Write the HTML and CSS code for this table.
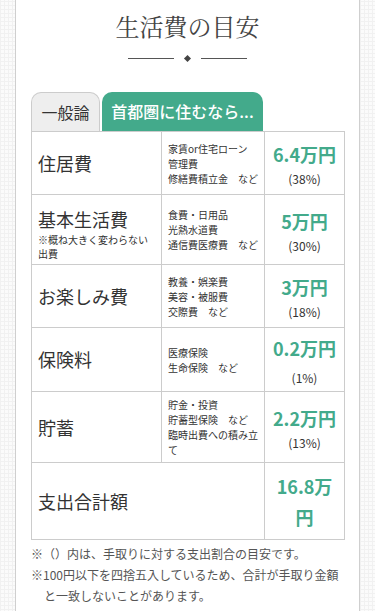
FILE: index.html
```
<!DOCTYPE html>
<html lang="ja">
<head>
<meta charset="utf-8">
<title>生活費の目安</title>
<link rel="stylesheet" href="styles.css">
</head>
<body>
<main class="panel">
  <h1 class="title">生活費の目安</h1>
  <div class="divider"><span class="line"></span><span class="diamond"></span><span class="line"></span></div>

  <div class="tabs">
    <div class="tab tab-off">一般論</div>
    <div class="tab tab-on">首都圏に住むなら...</div>
  </div>

  <table class="cost">
    <colgroup><col class="c1"><col class="c2"><col class="c3"></colgroup>
    <tr>
      <th class="item">住居費</th>
      <td class="detail">家賃or住宅ローン<br>管理費<br>修繕費積立金　など</td>
      <td class="amount"><div class="num">6.4万円</div><div class="pct">(38%)</div></td>
    </tr>
    <tr>
      <th class="item item-note"><div>基本生活費</div><div class="note">※概ね大きく変わらない出費</div></th>
      <td class="detail">食費・日用品<br>光熱水道費<br>通信費医療費　など</td>
      <td class="amount"><div class="num">5万円</div><div class="pct">(30%)</div></td>
    </tr>
    <tr>
      <th class="item">お楽しみ費</th>
      <td class="detail">教養・娯楽費<br>美容・被服費<br>交際費　など</td>
      <td class="amount"><div class="num">3万円</div><div class="pct">(18%)</div></td>
    </tr>
    <tr>
      <th class="item">保険料</th>
      <td class="detail">医療保険<br>生命保険　など</td>
      <td class="amount amount-wide"><div class="num">0.2万円</div><div class="pct pct-wide">(1%)</div></td>
    </tr>
    <tr>
      <th class="item">貯蓄</th>
      <td class="detail">貯金・投資<br>貯蓄型保険　など<br>臨時出費への積み立て</td>
      <td class="amount"><div class="num">2.2万円</div><div class="pct">(13%)</div></td>
    </tr>
    <tr>
      <th class="item" colspan="2">支出合計額</th>
      <td class="amount amount-total"><div class="num">16.8万円</div></td>
    </tr>
  </table>

  <ul class="notes">
    <li>※（）内は、手取りに対する支出割合の目安です。</li>
    <li>※100円以下を四捨五入しているため、合計が手取り金額と一致しないことがあります。</li>
  </ul>
</main>
</body>
</html>
```

FILE: styles.css
```
html, body {
  margin: 0;
  padding: 0;
}

body {
  font-family: "Noto Sans CJK JP", "Noto Sans", sans-serif;
  color: #333;
  text-spacing-trim: space-all;
  background-color: #fbfbfb;
  background-image:
    repeating-linear-gradient(0deg, #f1f1f1 0, #f1f1f1 1px, transparent 1px, transparent 4px),
    repeating-linear-gradient(90deg, #f1f1f1 0, #f1f1f1 1px, transparent 1px, transparent 4px);
  min-height: 611px;
}

.panel {
  box-sizing: border-box;
  margin-left: 15px;
  width: 345px;
  min-height: 611px;
  background: #fff;
  border-left: 1px solid #cfcfcf;
  border-right: 1px solid #cfcfcf;
  padding: 8px 15px 20px 15px;
}

.title {
  margin: 0;
  text-align: center;
  font-family: "Noto Serif CJK JP", "Liberation Serif", serif;
  font-weight: normal;
  font-size: 24px;
  line-height: 36px;
  color: #444;
}

.divider {
  display: flex;
  justify-content: center;
  align-items: center;
  gap: 11px;
  margin-top: 11px;
  height: 6px;
}

.divider .line {
  width: 46px;
  height: 1px;
  background: #555;
}

.divider .diamond {
  width: 5px;
  height: 5px;
  background: #444;
  transform: rotate(45deg);
}

.tabs {
  display: flex;
  gap: 2px;
  margin-top: 31px;
  height: 39px;
}

.tab {
  box-sizing: border-box;
  height: 39px;
  display: flex;
  align-items: center;
  justify-content: center;
  font-size: 16px;
  white-space: nowrap;
  border-radius: 10px 10px 0 0;
  padding: 0 0 1px;
}

.tab-off {
  width: 69px;
  background: #eeeeee;
  border: 1px solid #cccccc;
  border-bottom: none;
  color: #333;
}

.tab-on {
  width: 161px;
  background: #43aa8b;
  color: #fff;
  font-weight: 500;
}

.cost {
  border-collapse: collapse;
  width: 313px;
  table-layout: fixed;
}

.c1 { width: 130px; }
.c2 { width: 103px; }
.c3 { width: 80px; }

.cost th,
.cost td {
  border: 1px solid #cccccc;
  vertical-align: middle;
}

.item {
  text-align: left;
  font-weight: normal;
  font-size: 18px;
  line-height: 25px;
  padding: 6px 6px;
  color: #333;
}

.item-note {
  padding-top: 12px;
  padding-bottom: 3px;
}

.note {
  font-size: 10px;
  line-height: 14px;
  padding-top: 1px;
}

.detail {
  font-size: 10px;
  line-height: 15px;
  padding: 5px 6px;
  color: #333;
}

.amount {
  text-align: center;
  padding: 7px 4px 6px;
}

.amount-wide {
  padding: 5px 4px 4px;
}

.amount-total {
  padding: 8px 4px 6px;
}

.num {
  font-size: 18px;
  line-height: 31px;
  font-weight: bold;
  color: #43aa8b;
}

.pct {
  font-size: 12px;
  line-height: 18px;
  color: #333;
}

.pct-wide {
  padding-top: 5px;
}

.notes {
  list-style: none;
  margin: 3px 0 0;
  padding: 0;
  font-size: 12px;
  line-height: 21px;
  color: #555;
}

.notes li {
  padding-left: 13px;
  text-indent: -13px;
}
```
